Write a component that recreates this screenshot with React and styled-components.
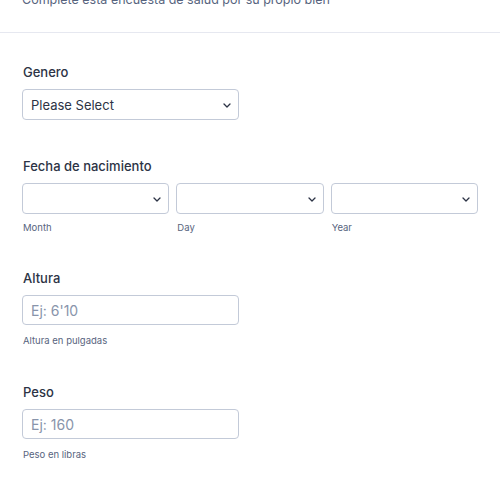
import React from "react";
import styled, { createGlobalStyle } from "styled-components";

const Global = createGlobalStyle`
  html, body { margin: 0; padding: 0; background: #fff; }
  body { font-family: Inter, "Noto Sans", sans-serif; color: #2c3345; overflow: hidden; }
  * { box-sizing: border-box; }
`;

const Page = styled.div`
  width: 500px;
  height: 484px;
  overflow: hidden;
  background: #fff;
`;

const Header = styled.header`
  margin-top: -10px;
  padding: 0 22px 22px;
  border-bottom: 1px solid #e6e8f0;
`;

const Subtitle = styled.p`
  margin: 0;
  font-size: 12.5px;
  line-height: 20px;
  color: #57647e;
`;

const Form = styled.div`
  display: flex;
  flex-direction: column;
  padding: 28px 22px 0;
`;

const Field = styled.div`
  display: flex;
  flex-direction: column;
  margin-bottom: ${(p) => p.$after || 0}px;
`;

const Label = styled.label`
  font-size: 13px;
  line-height: 22px;
  font-weight: 500;
  color: #2c3345;
  margin-bottom: 6px;
  padding-left: 1px;
`;

const Control = styled.div`
  position: relative;
  width: ${(p) => p.$width || "100%"};
  height: ${(p) => p.$h || 31}px;
  border: 1px solid #c3cad8;
  border-radius: 4px;
  background: #fff;
  display: flex;
  align-items: center;
  padding: 0 8px;
  font-size: ${(p) => (p.$placeholder ? 14 : 13)}px;
  color: ${(p) => (p.$placeholder ? "#8894ab" : "#2c3345")};
`;

const Chevron = styled.svg`
  position: absolute;
  right: 7px;
  top: 50%;
  margin-top: -2px;
`;

const DateRow = styled.div`
  display: grid;
  grid-template-columns: 1fr 1fr 1fr;
  gap: 7px;
`;

const DatePart = styled.div`
  display: flex;
  flex-direction: column;
`;

const SubLabel = styled.span`
  font-size: 9.5px;
  line-height: 14px;
  color: #57647e;
  margin-top: ${(p) => p.$gap || 7}px;
  padding-left: 1px;
`;

const Arrow = () => (
  <Chevron width="8" height="5" viewBox="0 0 8 5">
    <path d="M1 1l3 3 3-3" fill="none" stroke="#2c3345" strokeWidth="1.3" strokeLinecap="round" strokeLinejoin="round" />
  </Chevron>
);

const Select = ({ width, children }) => (
  <Control $width={width}>
    {children}
    <Arrow />
  </Control>
);

export default function App() {
  return (
    <Page>
      <Global />
      <Header>
        <Subtitle>Complete esta encuesta de salud por su propio bien</Subtitle>
      </Header>
      <Form>
        <Field $after={35}>
          <Label>Genero</Label>
          <Select width="217px">Please Select</Select>
        </Field>
        <Field $after={32}>
          <Label>Fecha de nacimiento</Label>
          <DateRow>
            {["Month", "Day", "Year"].map((s) => (
              <DatePart key={s}>
                <Select />
                <SubLabel>{s}</SubLabel>
              </DatePart>
            ))}
          </DateRow>
        </Field>
        <Field $after={33}>
          <Label>Altura</Label>
          <Control $width="217px" $h={30} $placeholder>Ej: 6'10</Control>
          <SubLabel $gap={9}>Altura en pulgadas</SubLabel>
        </Field>
        <Field>
          <Label>Peso</Label>
          <Control $width="217px" $h={30} $placeholder>Ej: 160</Control>
          <SubLabel $gap={9}>Peso en libras</SubLabel>
        </Field>
      </Form>
    </Page>
  );
}
